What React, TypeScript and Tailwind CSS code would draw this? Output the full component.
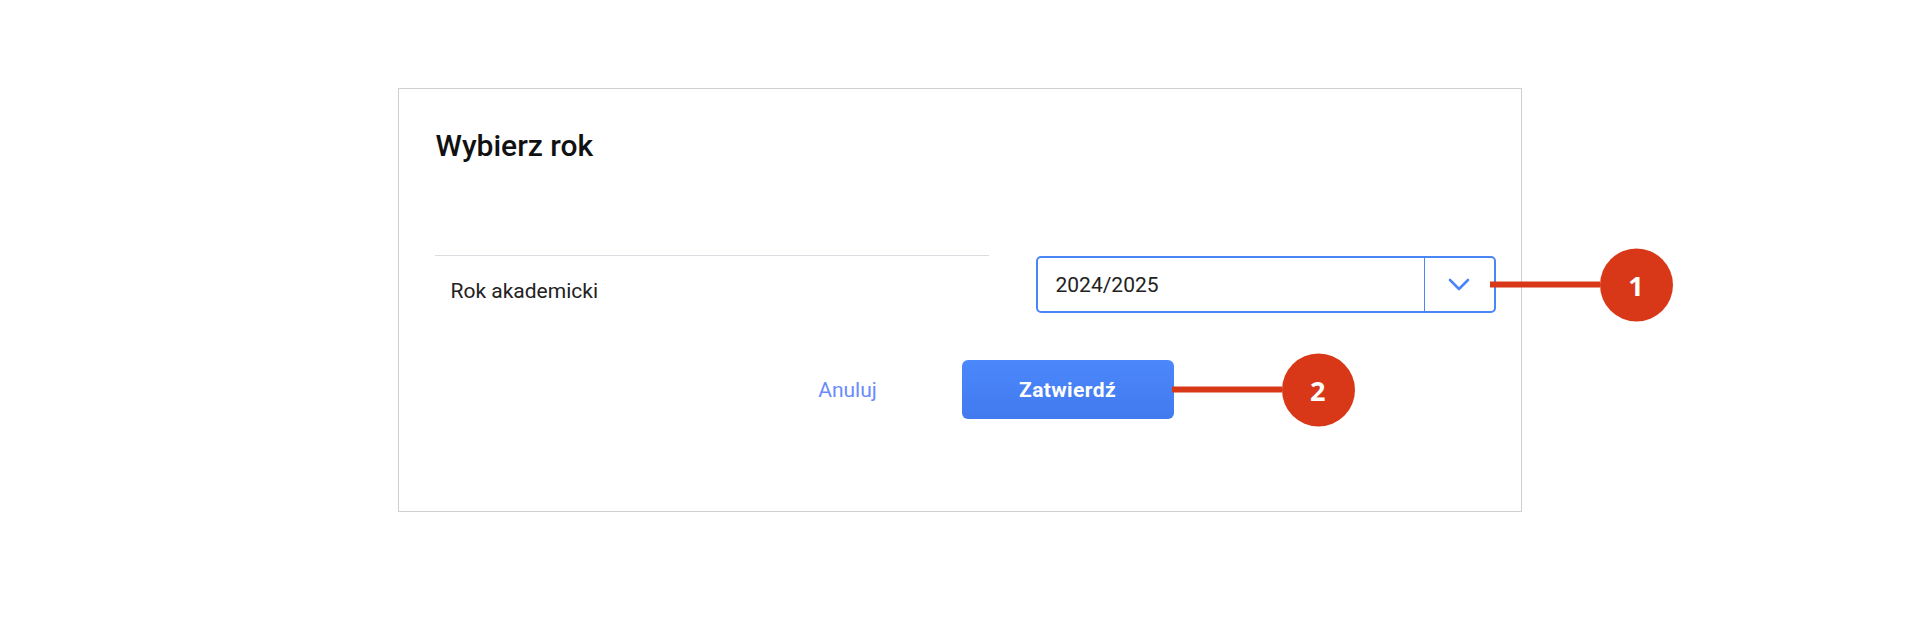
import { useState } from 'react';

const Callout = ({ n, className }: { n: number; className: string }) => (
    <div className={`absolute top-1/2 -translate-y-1/2 flex items-center pointer-events-none ${className}`}>
        <div className="w-[110px] h-[6px] bg-[#d83817]" />
        <div className="w-[73px] h-[73px] rounded-full bg-[#d83817] flex items-center justify-center text-white text-[27px] font-bold font-['Open_Sans',sans-serif] leading-none">
            {n}
        </div>
    </div>
);

export default function App() {
    const [year] = useState('2024/2025');

    return (
        <div className="min-h-[635px] bg-white pt-[88px] font-['Roboto',sans-serif]">
            <div className="mx-auto w-[1124px] h-[424px] border border-[#cfcfcf] bg-white pt-[39px] flex flex-col">
                <h2 className="pl-[37px] text-[30px] leading-[36px] font-medium text-[#111]">Wybierz rok</h2>

                <div className="mt-[91px] pl-[36px] flex items-start">
                    <div className="w-[554px] border-t border-[#dcdde2] pt-[21px] pl-[16px]">
                        <span className="text-[21px] leading-[28px] text-[#222]">Rok akademicki</span>
                    </div>
                    <div className="relative ml-[47px] mt-[1px] w-[460px] h-[57px] border-2 border-[#4a86f6] rounded-[5px] flex items-stretch">
                        <div className="flex-1 flex items-center pl-[18px] text-[21px] leading-[28px] text-[#222]">{year}</div>
                        <div className="w-[70px] border-l border-[#4a86f6] flex items-center justify-center">
                            <svg width="22" height="13" viewBox="0 0 22 13" fill="none">
                                <path d="M2 2 L11 11 L20 2" stroke="#4a86f6" strokeWidth="2.6" strokeLinecap="round" strokeLinejoin="round" />
                            </svg>
                        </div>
                        <Callout n={1} className="left-[452px]" />
                    </div>
                </div>

                <div className="mt-[47px] flex justify-center gap-[8px] pr-[4px]">
                    <button className="w-[212px] h-[59px] text-[21px] leading-[28px] text-[#6a8bfb]">Anuluj</button>
                    <button className="relative w-[212px] h-[59px] rounded-[6px] bg-gradient-to-b from-[#4b88fb] to-[#4279ef] text-white text-[21px] leading-[28px] font-bold tracking-[0.4px]">
                        Zatwierdź
                        <Callout n={2} className="left-[210px]" />
                    </button>
                </div>
            </div>
        </div>
    );
}
